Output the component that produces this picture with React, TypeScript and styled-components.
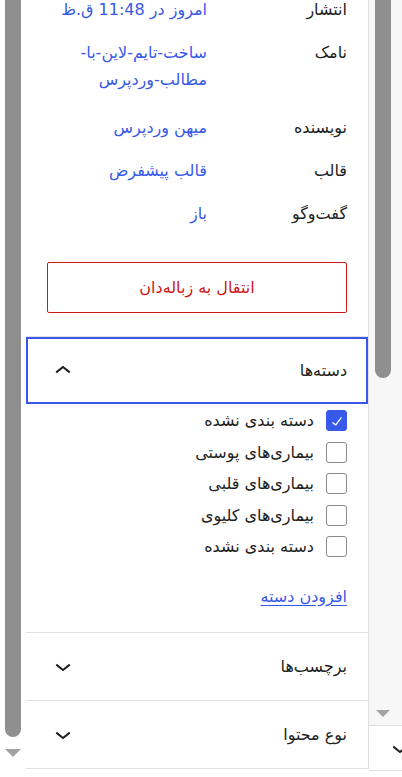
import styled, { createGlobalStyle } from 'styled-components';

const GlobalStyle = createGlobalStyle`
  html, body {
    margin: 0;
    padding: 0;
    background: #fff;
  }
  body {
    font-family: "DejaVu Sans", "Noto Sans", sans-serif;
    color: #1e1e1e;
  }
`;

const ACCENT = '#3858e9';
const DIVIDER = '#e0e0e0';
const SCROLL_THUMB = '#8f8f8f';

const Screen = styled.div`
  display: flex;
  height: 777px;
  overflow: hidden;
  background: #fff;
`;

/* ---------- scrollbars ---------- */

const LeftRail = styled.div`
  flex: none;
  width: 26px;
  display: flex;
  flex-direction: column;
  align-items: center;
`;

const Thumb = styled.div<{ $height: number }>`
  flex: none;
  width: 16px;
  height: ${({ $height }) => $height}px;
  background: ${SCROLL_THUMB};
  border-radius: 0 0 8px 8px;
`;

const DownArrow = styled.div<{ $size: number; $gap: number }>`
  flex: none;
  margin-top: ${({ $gap }) => $gap}px;
  width: 0;
  height: 0;
  border-left: ${({ $size }) => $size}px solid transparent;
  border-right: ${({ $size }) => $size}px solid transparent;
  border-top: ${({ $size }) => $size}px solid #a2a2a2;
`;

const RightRail = styled.div`
  flex: none;
  width: 33px;
  height: 770px;
  display: flex;
  flex-direction: column;
  border-bottom: 1px solid ${DIVIDER};
  overflow: hidden;
`;

const RightTrack = styled.div`
  flex: none;
  height: 726px;
  display: flex;
  flex-direction: column;
  align-items: center;
  padding-right: 5px;
  background: #f7f7f7;
  border-bottom: 1px solid #dcdcdc;
  box-sizing: border-box;
`;

const PeekToggle = styled.div`
  flex: 1;
  display: flex;
  align-items: center;
  padding-left: 15px;
  color: #1e1e1e;
`;

/* ---------- settings panel ---------- */

const Panel = styled.div`
  flex: none;
  width: 343px;
  height: 769px;
  display: flex;
  flex-direction: column;
  overflow: hidden;
  border-right: 1px solid ${DIVIDER};
  border-bottom: 1px solid ${DIVIDER};
  box-sizing: border-box;
  background: #fff;
  font-size: 16px;
`;

const Summary = styled.div`
  margin-top: -12px;
  display: flex;
  flex-direction: column;
`;

const Row = styled.div`
  display: flex;
  align-items: flex-start;
  min-height: 43px;
  padding: 0 21px;
`;

const RowLabel = styled.div`
  flex: none;
  width: 140px;
  line-height: 43px;
`;

const RowValue = styled.div<{ $wrap?: boolean }>`
  flex: 1;
  min-width: 0;
  padding: 8px 0 ${({ $wrap }) => ($wrap ? 13 : 8)}px;
  line-height: 27px;
  color: ${ACCENT};
`;

const SlugLine = styled.span`
  display: block;
`;

const TrashBox = styled.div`
  padding: 27px 21px 23px;
`;

const TrashButton = styled.button`
  display: flex;
  align-items: center;
  justify-content: center;
  width: 100%;
  height: 51px;
  border: 1px solid #cc1818;
  border-radius: 2px;
  background: #fff;
  color: #cc1818;
  font: inherit;
  font-size: 16px;
`;

const Section = styled.div`
  border-top: 1px solid ${DIVIDER};
`;

const SectionHeader = styled.div<{ $focused?: boolean }>`
  display: flex;
  align-items: center;
  justify-content: space-between;
  height: 67px;
  padding: 0 21px;
  box-sizing: border-box;
  font-weight: 500;
  box-shadow: ${({ $focused }) => ($focused ? `inset 0 0 0 2px ${ACCENT}` : 'none')};
`;

const CategoryBody = styled.div`
  padding: 1px 21px 22px;
  display: flex;
  flex-direction: column;
  align-items: flex-start;
`;

const CategoryItem = styled.label`
  display: flex;
  align-items: center;
  gap: 12px;
  height: 31.5px;
`;

const Box = styled.span<{ $checked?: boolean }>`
  flex: none;
  display: inline-flex;
  align-items: center;
  justify-content: center;
  width: 21px;
  height: 21px;
  box-sizing: border-box;
  border-radius: 3px;
  border: 1px solid ${({ $checked }) => ($checked ? ACCENT : '#8a8a8a')};
  background: ${({ $checked }) => ($checked ? ACCENT : '#fff')};
  color: #fff;
`;

const AddLink = styled.a`
  margin-top: 20px;
  line-height: 27px;
  color: ${ACCENT};
  text-decoration: underline;
  text-underline-offset: 3px;
`;

const Icon = styled.svg`
  flex: none;
  display: block;
`;

function ChevronIcon({ up }: { up?: boolean }) {
  return (
    <Icon width="32" height="32" viewBox="0 0 24 24" aria-hidden="true">
      <path
        fill="currentColor"
        d={
          up
            ? 'M6.5 12.4L12 8l5.5 4.4-.9 1.2L12 10l-4.6 3.6-1-1.2z'
            : 'M17.5 11.6L12 16l-5.5-4.4.9-1.2L12 14l4.6-3.6 1 1.2z'
        }
      />
    </Icon>
  );
}

function CheckIcon() {
  return (
    <Icon width="20" height="20" viewBox="0 0 24 24" aria-hidden="true">
      <path fill="currentColor" d="M16.7 7.1l-6.3 8.5-3.4-2.5-.9 1.2 4.6 3.4L17.9 8z" />
    </Icon>
  );
}

const categories = [
  { name: 'دسته بندی نشده', checked: true },
  { name: 'بیماری‌های پوستی' },
  { name: 'بیماری‌های قلبی' },
  { name: 'بیماری‌های کلیوی' },
  { name: 'دسته بندی نشده' },
];

export default function App() {
  return (
    <>
      <GlobalStyle />
      <Screen>
        <LeftRail>
          <Thumb $height={737} />
          <DownArrow $size={8} $gap={12} />
        </LeftRail>

        <Panel dir="rtl">
          <Summary>
            <Row>
              <RowLabel>انتشار</RowLabel>
              <RowValue>امروز در 11:48 ق.ظ</RowValue>
            </Row>
            <Row>
              <RowLabel>نامک</RowLabel>
              <RowValue $wrap>
                <SlugLine>ساخت-تایم-لاین-با-</SlugLine>
                <SlugLine>مطالب-وردپرس</SlugLine>
              </RowValue>
            </Row>
            <Row>
              <RowLabel>نویسنده</RowLabel>
              <RowValue>میهن وردپرس</RowValue>
            </Row>
            <Row>
              <RowLabel>قالب</RowLabel>
              <RowValue>قالب پیشفرض</RowValue>
            </Row>
            <Row>
              <RowLabel>گفت‌وگو</RowLabel>
              <RowValue>باز</RowValue>
            </Row>
          </Summary>

          <TrashBox>
            <TrashButton type="button">انتقال به زباله‌دان</TrashButton>
          </TrashBox>

          <Section>
            <SectionHeader $focused>
              <span>دسته‌ها</span>
              <ChevronIcon up />
            </SectionHeader>
            <CategoryBody>
              {categories.map((cat, i) => (
                <CategoryItem key={i}>
                  <Box $checked={cat.checked}>{cat.checked ? <CheckIcon /> : null}</Box>
                  {cat.name}
                </CategoryItem>
              ))}
              <AddLink href="#">افزودن دسته</AddLink>
            </CategoryBody>
          </Section>

          <Section>
            <SectionHeader>
              <span>برچسب‌ها</span>
              <ChevronIcon />
            </SectionHeader>
          </Section>

          <Section>
            <SectionHeader>
              <span>نوع محتوا</span>
              <ChevronIcon />
            </SectionHeader>
          </Section>
        </Panel>

        <RightRail>
          <RightTrack>
            <Thumb $height={378} />
            <DownArrow $size={7} $gap={332} />
          </RightTrack>
          <PeekToggle>
            <ChevronIcon />
          </PeekToggle>
        </RightRail>
      </Screen>
    </>
  );
}
